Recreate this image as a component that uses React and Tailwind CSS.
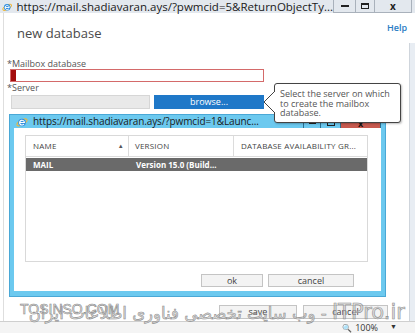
import React from "react";

const IeIcon = ({ className }) => (
  <svg className={className} viewBox="0 0 16 16">
    <ellipse cx="8" cy="8.5" rx="7.5" ry="3" fill="none" stroke="#f2b632" strokeWidth="1.4" transform="rotate(-30 8 8.5)" />
    <circle cx="8" cy="8.5" r="5" fill="#2f8ee0" />
    <path d="M4.8 8.7h6.4a3.2 3.2 0 1 0-.6 2" fill="none" stroke="#fff" strokeWidth="1.5" />
  </svg>
);

const OuterTitleBar = () => (
  <div className="h-[13px] flex items-center bg-[#e3e8ee] shrink-0">
    <IeIcon className="w-[12px] h-[12px] ml-[2px]" />
    <span className="ml-[4px] text-[11.5px] leading-[13px] text-[#1a1a1a] whitespace-nowrap">
      https://mail.shadiavaran.ays/?pwmcid=5&amp;ReturnObjectTy...
    </span>
    <div className="ml-auto mr-[3px] flex h-[13px] border-x border-b border-[#a9b1bb]">
      <div className="w-[22px] flex items-center justify-center border-r border-[#a9b1bb]">
        <div className="w-[8px] h-[2px] bg-[#222]" />
      </div>
      <div className="w-[19px] flex items-center justify-center border-r border-[#a9b1bb]">
        <div className="w-[8px] h-[6px] border border-[#222] border-t-2" />
      </div>
      <div className="w-[36px] flex items-center justify-center text-[10px] font-bold text-[#222] leading-none">x</div>
    </div>
  </div>
);

const InnerWindow = () => (
  <div className="absolute left-[9px] top-[114px] w-[377px] h-[183px] bg-[#6cc9ef] flex flex-col border border-[#4aa8d6]">
    <div className="h-[13px] flex items-center shrink-0">
      <IeIcon className="w-[12px] h-[12px] ml-[6px] shrink-0" />
      <span className="ml-[5px] min-w-0 overflow-hidden text-[10px] tracking-[-0.1px] leading-[13px] text-[#1a1a1a] whitespace-nowrap">
        https://mail.shadiavaran.ays/?pwmcid=1&amp;Launc...
      </span>
      <div className="ml-auto mr-[4px] flex h-[12px] self-start mt-[2px] shrink-0">
        <div className="w-[18px] flex items-center justify-center border border-[#2c6f8f] bg-[#6cc9ef]">
          <div className="w-[7px] h-[2px] bg-[#222]" />
        </div>
        <div className="w-[20px] flex items-center justify-center border-y border-r border-[#2c6f8f]">
          <div className="w-[8px] h-[6px] border border-[#222] border-t-2" />
        </div>
        <div className="w-[40px] flex items-center justify-center bg-[#c75a4f] border-y border-r border-[#2c6f8f] text-[9px] font-bold text-[#111] leading-none">x</div>
      </div>
    </div>
    <div className="flex-1 mx-[4px] mb-[5px] bg-white flex flex-col">
      <div className="ml-[11px] mt-[7px] w-[343px] h-[127px] border border-[#d9d9d9] flex flex-col">
        <div className="h-[21px] flex border-b border-[#dcdcdc] text-[8px] text-[#444] tracking-[0.2px]">
          <div className="w-[103px] flex items-center pl-[7px] pr-[4px] border-r border-[#dcdcdc]">
            <span>NAME</span>
            <span className="ml-auto text-[6px] text-[#555]">▲</span>
          </div>
          <div className="w-[105px] flex items-center pl-[6px] border-r border-[#dcdcdc]">VERSION</div>
          <div className="flex-1 flex items-center pl-[7px]">DATABASE AVAILABILITY GR...</div>
        </div>
        <div className="mt-[1px] h-[13px] flex items-center bg-[#6a6a6a] text-[8px] font-bold text-white">
          <div className="w-[103px] pl-[7px]">MAIL</div>
          <div className="pl-[7px]">Version 15.0 (Build...</div>
        </div>
      </div>
      <div className="mt-[12px] flex justify-end gap-[5px] pr-[27px]">
        <button className="w-[62px] h-[13px] bg-[#f3f3f3] border border-[#c4c4c4] text-[9px] leading-[11px] text-[#444]">ok</button>
        <button className="w-[86px] h-[13px] bg-[#f3f3f3] border border-[#c4c4c4] text-[9px] leading-[11px] text-[#444]">cancel</button>
      </div>
    </div>
  </div>
);

const Tooltip = () => (
  <div className="absolute left-[263px] top-[83px] flex">
    <svg className="w-[12px] h-[22px] mt-[8px] -mr-[1px] relative z-10" viewBox="0 0 12 22">
      <polyline points="12,0 1,11 12,22" fill="white" stroke="#444" strokeWidth="1" />
    </svg>
    <div className="w-[127px] h-[40px] bg-white border border-[#444] rounded-[3px] shadow-[1px_1px_2px_rgba(0,0,0,0.25)] pl-[5px] pt-[5px] text-[9px] leading-[9.5px] text-[#555] whitespace-nowrap">
      <div>Select the server on which</div>
      <div>to create the mailbox</div>
      <div>database.</div>
    </div>
  </div>
);

const Watermark = () => (
  <div className="absolute left-0 right-0 top-[296px] h-[30px] pointer-events-none">
    <div
      dir="rtl"
      className="absolute right-[10px] top-[3px] whitespace-nowrap text-[16.5px] leading-[26px] font-['DejaVu_Sans',sans-serif] text-[rgba(200,200,200,0.55)] [-webkit-text-stroke:0.6px_#8f8f8f]"
    >
      <span className="text-[21px]">ITPro.ir</span> - وب سایت تخصصی فناوری اطلاعات ایران
    </div>
    <div className="absolute left-[20px] top-[5px] text-[14px] leading-[16px] font-['Liberation_Sans',sans-serif] text-[rgba(230,230,230,0.5)] [-webkit-text-stroke:0.6px_#888]">
      TOSINSO.COM
    </div>
  </div>
);

export default function App() {
  return (
    <div className="w-[415px] h-[333px] relative overflow-hidden bg-white flex flex-col font-['Open_Sans',sans-serif]">
      <OuterTitleBar />
      <div className="flex-1 flex">
        <div className="flex-1 flex flex-col ml-[3px] border-l border-[#dedede] pl-[3px]">
          <div className="flex items-start justify-between pt-[11px] pr-[2px]">
            <h1 className="ml-[10px] text-[13px] leading-[18px] text-[#4a4a4a]">new database</h1>
            <a className="mt-[-3px] text-[9px] font-semibold text-[#2a7cc4]">Help</a>
          </div>
          <div className="mt-[17px] text-[9px] leading-[10px] text-[#555]">*Mailbox database</div>
          <div className="ml-[3px] w-[254px] h-[13px] border border-[#d46a6a] flex">
            <div className="w-[5px] bg-[#a30d0d]" />
          </div>
          <div className="mt-[1px] text-[9px] leading-[10px] text-[#555]">*Server</div>
          <div className="mt-[2px] ml-[4px] flex gap-[4px] h-[14px]">
            <div className="w-[139px] bg-[#e9e9e9] border border-[#d6d6d6]" />
            <button className="w-[110px] bg-[#1f78c8] text-white text-[9px] leading-[14px]">browse...</button>
          </div>
          <div className="flex-1" />
          <div className="flex justify-end gap-[6px] mr-[21px] mb-[2px]">
            <button className="w-[78px] h-[14px] bg-[#f3f3f3] border border-[#c4c4c4] text-[9px] leading-[12px] text-[#444]">save</button>
            <button className="w-[85px] h-[14px] bg-[#f3f3f3] border border-[#c4c4c4] text-[9px] leading-[12px] text-[#444]">cancel</button>
          </div>
        </div>
        <div className="w-[6px] mt-[30px] border-l border-[#cfd5dc] bg-[#e8edf3]" />
      </div>
      <div className="h-[12px] shrink-0 border-t border-[#cfcfcf] bg-[#f4f4f4] flex items-center justify-end pr-[18px] text-[9px] text-[#333]">
        <span className="text-[8px] text-[#2a6fb0] mr-[3px]">🔍</span>
        <span>100%</span>
        <span className="ml-[12px] text-[7px]">▼</span>
      </div>
      <InnerWindow />
      <Tooltip />
      <Watermark />
    </div>
  );
}
